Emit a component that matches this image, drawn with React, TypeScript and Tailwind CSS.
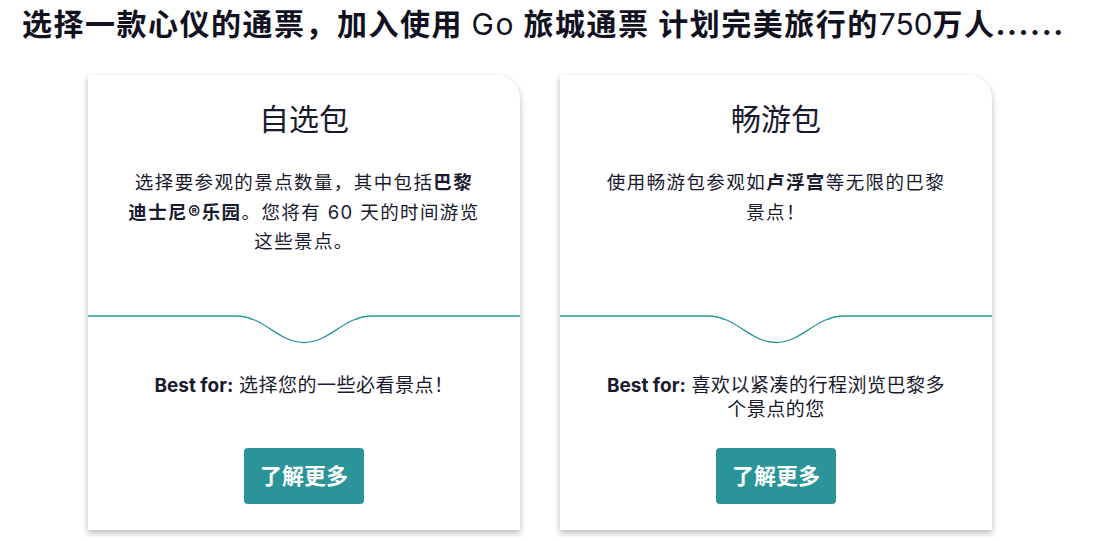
import React from 'react';

interface PassCardProps {
  title: string;
  description: React.ReactNode;
  bestFor: string;
}

function Wave() {
  return (
    <svg width="432" height="30" viewBox="0 0 432 30" className="block shrink-0">
      <path
        d="M0 1 H148 C176 1 190 27.5 216 27.5 C242 27.5 256 1 284 1 H432"
        fill="none"
        stroke="#2a9499"
        strokeWidth="1.3"
      />
    </svg>
  );
}

function PassCard({ title, description, bestFor }: PassCardProps) {
  return (
    <div className="flex flex-col w-[432px] h-[455px] bg-white rounded-tr-[24px] shadow-[0_3px_6px_rgba(0,0,0,0.28)]">
      {/* Top */}
      <div className="h-[240px] pt-[24px] px-[40px] flex flex-col items-center">
        <h3 className="text-[30px] leading-[40px] text-[#1a1a2e]">{title}</h3>
        <p className="mt-[29px] text-[18.5px] leading-[29.5px] tracking-[1.4px] text-center text-[#1a1a2e]">
          {description}
        </p>
      </div>

      <Wave />

      {/* Bottom */}
      <div className="flex-1 flex flex-col items-center px-[38px] pt-[29px]">
        <p className="text-[19px] leading-[24px] tracking-[0.5px] text-center text-[#1a1a2e] min-h-[48px]">
          <span className="font-bold tracking-normal">Best for:</span> {bestFor}
        </p>
        <button className="mt-[26px] w-[120px] h-[56px] rounded-[4px] bg-[#2a9499] text-white text-[22px] font-bold">
          了解更多
        </button>
      </div>
    </div>
  );
}

export default function App() {
  return (
    <div
      className="w-[1097px] h-[541px] bg-white overflow-hidden"
      style={{ fontFamily: 'Inter, "Noto Sans CJK SC", sans-serif' }}
    >
      {/* Header */}
      <h1 className="pl-[22px] pt-[4px] text-[30px] leading-[40px] font-bold tracking-[1.5px] text-[#11111f] whitespace-nowrap">
        选择一款心仪的通票，加入使用 <span className="font-normal">Go</span> 旅城通票 计划完美旅行的
        <span className="font-normal tracking-normal">750</span>万人......
      </h1>

      {/* Cards */}
      <div className="flex gap-[40px] pl-[88px] mt-[31px]">
        <PassCard
          title="自选包"
          description={
            <>
              选择要参观的景点数量，其中包括<b>巴黎迪士尼®乐园</b>。您将有 60 天的时间游览这些景点。
            </>
          }
          bestFor="选择您的一些必看景点！"
        />
        <PassCard
          title="畅游包"
          description={
            <>
              使用畅游包参观如<b>卢浮宫</b>等无限的巴黎景点！
            </>
          }
          bestFor="喜欢以紧凑的行程浏览巴黎多个景点的您"
        />
      </div>
    </div>
  );
}
